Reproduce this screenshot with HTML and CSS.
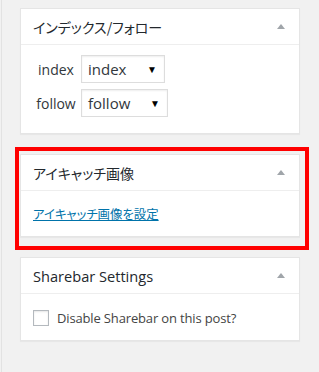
FILE: index.html
```html
<!DOCTYPE html>
<html lang="ja">
<head>
  <meta charset="UTF-8">
  <title>Post Sidebar</title>
  <link rel="stylesheet" href="styles.css">
</head>
<body>

<div class="sidebar">
  <!-- Index / follow box -->
  <div class="postbox">
    <h2 class="hndle"><span class="ja">インデックス/フォロー</span><i class="toggle"></i></h2>
    <div class="inside robots">
      <label>index</label>
      <div class="select w84"><span>index</span><b>▼</b></div>
      <label>follow</label>
      <div class="select w87"><span>follow</span><b>▼</b></div>
    </div>
  </div>

  <!-- Featured image box -->
  <div class="postbox">
    <h2 class="hndle"><span class="ja">アイキャッチ画像</span><i class="toggle"></i></h2>
    <div class="inside thumb">
      <a href="#" class="ja">アイキャッチ画像を設定</a>
    </div>
  </div>

  <!-- Sharebar box -->
  <div class="postbox">
    <h2 class="hndle"><span class="en">Sharebar Settings</span><i class="toggle"></i></h2>
    <div class="inside share">
      <span class="checkbox"></span>
      <span>Disable Sharebar on this post?</span>
    </div>
  </div>

  <!-- screenshot highlight -->
  <div class="highlight"></div>
</div>

</body>
</html>
```

FILE: styles.css
```css
* {
  box-sizing: border-box;
}
body {
  margin: 0;
  background: #f1f1f1;
  font-family: "Open Sans", "Noto Sans", sans-serif;
  color: #23282d;
}
.sidebar {
  position: relative;
  margin-left: 1px;
  border-left: 1px solid #e2e2e2;
  padding: 8px 19px 0 18px;
  min-height: 372px;
}
.ja {
  font-family: "Noto Sans CJK JP", sans-serif;
  font-feature-settings: "palt";
}
.postbox {
  background: white;
  border: 1px solid #e5e5e5;
  box-shadow: 0 1px 1px rgba(0,0,0,0.04);
  margin-bottom: 20px;
}
.hndle {
  margin: 0;
  height: 36px;
  padding: 0 14px 0 12px;
  border-bottom: 1px solid #eee;
  font-size: 14px;
  font-weight: normal;
  display: flex;
  align-items: center;
  justify-content: space-between;
}
.hndle .en {
  font-size: 14.6px;
}
.toggle {
  width: 0;
  height: 0;
  border-left: 4.5px solid transparent;
  border-right: 4.5px solid transparent;
  border-bottom: 5px solid #a0a5aa;
}
.robots {
  display: grid;
  grid-template-columns: 46px auto;
  column-gap: 2px;
  row-gap: 6px;
  align-items: center;
  justify-items: start;
  padding: 10px 12px 16px;
  font-size: 14px;
  color: #32373c;
}
.robots label {
  justify-self: center;
}
.select {
  height: 28px;
  border: 1px solid #ddd;
  box-shadow: inset 0 1px 2px rgba(0,0,0,0.07);
  display: flex;
  align-items: center;
  justify-content: space-between;
  padding: 0 7px 0 6px;
  font-size: 15px;
  color: #32373c;
}
.select b {
  font-size: 10px;
  color: #000;
}
.w84 { width: 84px; }
.w87 { width: 87px; }
.thumb {
  height: 45px;
  padding: 0 12px;
  display: flex;
  align-items: center;
}
.thumb a {
  color: #0073aa;
  font-size: 12.4px;
}
.share {
  height: 46px;
  padding: 16px 12px 0;
  display: flex;
  align-items: flex-start;
  gap: 8px;
  font-size: 13px;
  letter-spacing: -0.15px;
  color: #444;
}
.share span:last-child {
  line-height: 16px;
}
.checkbox {
  width: 16px;
  height: 16px;
  border: 1px solid #b4b9be;
  box-shadow: inset 0 1px 2px rgba(0,0,0,0.1);
  background: white;
}
.highlight {
  position: absolute;
  left: 13px;
  top: 147px;
  width: 294px;
  height: 103px;
  border: 4px solid #f00;
}
```
